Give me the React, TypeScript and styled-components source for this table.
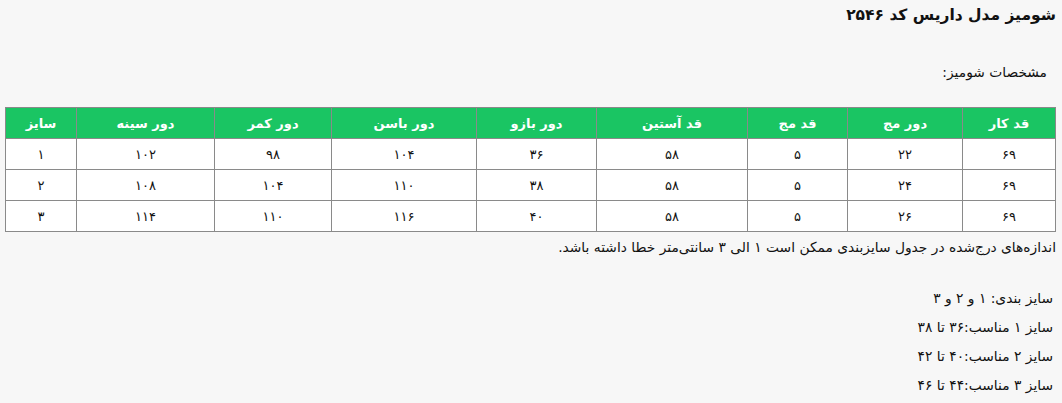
import React from 'react';
import styled, { createGlobalStyle } from 'styled-components';

const colors = {
  page: '#f7f7f7',
  green: '#1ac563',
  border: '#8a8a8a',
  text: '#111111',
  white: '#ffffff',
};

const GlobalStyle = createGlobalStyle`
  html, body {
    margin: 0;
    padding: 0;
    background: ${colors.page};
  }
  body {
    font-family: 'DejaVu Sans', 'Noto Sans', sans-serif;
    color: ${colors.text};
  }
`;

const Page = styled.div`
  direction: rtl;
  padding: 0 6px;
  font-size: 13.8px;
`;

const Title = styled.h1`
  margin: 0;
  font-size: 15.5px;
  font-weight: bold;
  line-height: 30px;
`;

const SpecLabel = styled.p`
  margin: 32px 9px 0 0;
  line-height: 20px;
`;

const Table = styled.table`
  margin-top: 25px;
  width: 1050px;
  border-collapse: collapse;
  table-layout: fixed;
  background: ${colors.white};
`;

const HeadCell = styled.th`
  background: ${colors.green};
  color: ${colors.white};
  font-weight: bold;
  font-size: 13px;
  height: 30px;
  padding: 0;
  border: 1px solid ${colors.border};
  text-align: center;
`;

const Cell = styled.td`
  height: 30px;
  padding: 0;
  font-size: 13px;
  border: 1px solid ${colors.border};
  text-align: center;
`;

const Note = styled.p`
  margin: 1px 0 0;
  line-height: 29px;
`;

const SizeList = styled.div`
  margin-top: 22px;
  padding-right: 3px;
`;

const SizeLine = styled.p`
  margin: 0;
  line-height: 29px;
`;

const columns = [
  { title: 'قد کار', width: 93 },
  { title: 'دور مج', width: 115 },
  { title: 'قد مج', width: 100 },
  { title: 'قد آستین', width: 151 },
  { title: 'دور بازو', width: 120 },
  { title: 'دور باسن', width: 145 },
  { title: 'دور کمر', width: 117 },
  { title: 'دور سینه', width: 138 },
  { title: 'سایز', width: 71 },
];

const rows = [
  ['۶۹', '۲۲', '۵', '۵۸', '۳۶', '۱۰۴', '۹۸', '۱۰۲', '۱'],
  ['۶۹', '۲۴', '۵', '۵۸', '۳۸', '۱۱۰', '۱۰۴', '۱۰۸', '۲'],
  ['۶۹', '۲۶', '۵', '۵۸', '۴۰', '۱۱۶', '۱۱۰', '۱۱۴', '۳'],
];

const sizes = [
  'سایز بندی: ۱ و ۲ و ۳',
  'سایز ۱ مناسب:۳۶ تا ۳۸',
  'سایز ۲ مناسب:۴۰ تا ۴۲',
  'سایز ۳ مناسب:۴۴ تا ۴۶',
];

const App: React.FC = () => {
  return (
    <>
      <GlobalStyle />
      <Page>
        <Title>شومیز مدل داریس کد ۲۵۴۶</Title>
        <SpecLabel>مشخصات شومیز:</SpecLabel>
        <Table>
          <colgroup>
            {columns.map((c) => (
              <col key={c.title} style={{ width: c.width }} />
            ))}
          </colgroup>
          <thead>
            <tr>
              {columns.map((c) => (
                <HeadCell key={c.title}>{c.title}</HeadCell>
              ))}
            </tr>
          </thead>
          <tbody>
            {rows.map((row, i) => (
              <tr key={i}>
                {row.map((v, j) => (
                  <Cell key={j}>{v}</Cell>
                ))}
              </tr>
            ))}
          </tbody>
        </Table>
        <Note>
          اندازه‌های درج‌شده در جدول سایزبندی ممکن است ۱ الی ۳ سانتی‌متر خطا داشته باشد.
        </Note>
        <SizeList>
          {sizes.map((s) => (
            <SizeLine key={s}>{s}</SizeLine>
          ))}
        </SizeList>
      </Page>
    </>
  );
};

export default App;
